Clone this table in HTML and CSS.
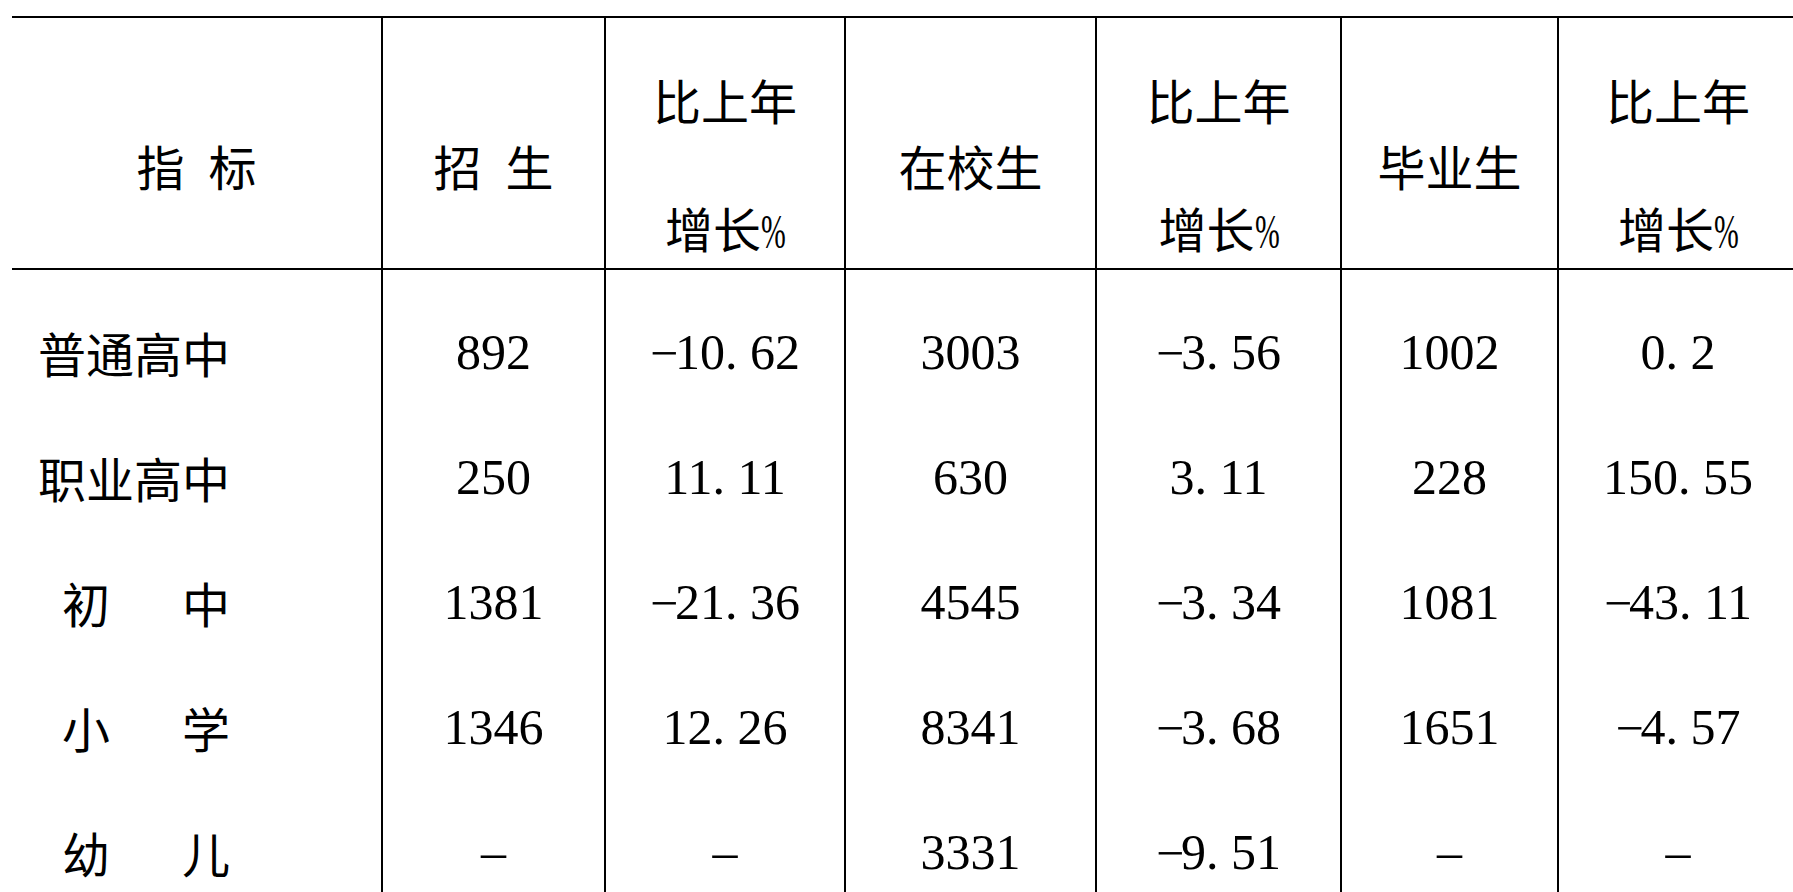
FILE: index.html
```html
<!DOCTYPE html>
<html lang="zh-CN">
<head>
<meta charset="utf-8">
<title>教育统计</title>
<link rel="stylesheet" href="styles.css">
</head>
<body>
<div class="sheet">
  <div class="h first"><span>指&ensp;标</span></div>
  <div class="h"><span>招&ensp;生</span></div>
  <div class="h"><span>比上年<br>增长<span class="pct">%</span></span></div>
  <div class="h"><span>在校生</span></div>
  <div class="h"><span>比上年<br>增长<span class="pct">%</span></span></div>
  <div class="h"><span>毕业生</span></div>
  <div class="h"><span>比上年<br>增长<span class="pct">%</span></span></div>

  <div class="lab r1">普通高中</div>
  <div class="num r1">892</div>
  <div class="num r1"><span class="m">−</span>10<span class="d">.</span>62</div>
  <div class="num r1">3003</div>
  <div class="num r1"><span class="m">−</span>3<span class="d">.</span>56</div>
  <div class="num r1">1002</div>
  <div class="num r1">0<span class="d">.</span>2</div>

  <div class="lab">职业高中</div>
  <div class="num">250</div>
  <div class="num">11<span class="d">.</span>11</div>
  <div class="num">630</div>
  <div class="num">3<span class="d">.</span>11</div>
  <div class="num">228</div>
  <div class="num">150<span class="d">.</span>55</div>

  <div class="lab two">初中</div>
  <div class="num">1381</div>
  <div class="num"><span class="m">−</span>21<span class="d">.</span>36</div>
  <div class="num">4545</div>
  <div class="num"><span class="m">−</span>3<span class="d">.</span>34</div>
  <div class="num">1081</div>
  <div class="num"><span class="m">−</span>43<span class="d">.</span>11</div>

  <div class="lab two">小学</div>
  <div class="num">1346</div>
  <div class="num">12<span class="d">.</span>26</div>
  <div class="num">8341</div>
  <div class="num"><span class="m">−</span>3<span class="d">.</span>68</div>
  <div class="num">1651</div>
  <div class="num"><span class="m">−</span>4<span class="d">.</span>57</div>

  <div class="lab two">幼儿</div>
  <div class="num">–</div>
  <div class="num">–</div>
  <div class="num">3331</div>
  <div class="num"><span class="m">−</span>9<span class="d">.</span>51</div>
  <div class="num">–</div>
  <div class="num">–</div>
</div>
</body>
</html>
```

FILE: styles.css
```css
html, body {
  margin: 0;
  padding: 0;
  background: #fff;
  overflow: hidden;
  height: 892px;
}

body {
  color: #000;
  font-family: "Noto Sans CJK SC", sans-serif;
}

.sheet {
  display: grid;
  grid-template-columns: 369px 223px 240px 251px 245px 217px 240px;
  grid-template-rows: 252px 145px 125px 125px 125px 125px;
  width: max-content;
  margin: 16px 0 0 12px;
  border-top: 2px solid #000;
}

.sheet > div {
  border-left: 2px solid #000;
  display: flex;
  align-items: center;
  justify-content: center;
  min-width: 0;
}

.sheet > .first,
.sheet > .lab {
  border-left: none;
}

.h {
  border-bottom: 2px solid #000;
  font-size: 48px;
  line-height: 128px;
  padding-top: 44px;
  text-align: center;
  white-space: nowrap;
}

.pct {
  font-family: "Liberation Serif", serif;
  display: inline-block;
  width: 0.5em;
  text-align: left;
  transform: scaleX(0.62);
  transform-origin: left center;
}

.lab {
  font-size: 48px;
  line-height: 125px;
  white-space: nowrap;
}

.sheet > .lab {
  justify-content: flex-start;
  padding-left: 26px;
}

.sheet > .two {
  padding-left: 50px;
  letter-spacing: 1.5em;
}

.num {
  font-family: "Liberation Serif", serif;
  font-size: 50px;
  line-height: 125px;
  white-space: nowrap;
}

.r1 {
  padding-top: 20px;
}

.m {
  display: inline-block;
  width: 0.5em;
  line-height: 1;
  text-align: left;
  vertical-align: 0.08em;
}

.d {
  display: inline-block;
  width: 0.5em;
  text-align: left;
}
```
